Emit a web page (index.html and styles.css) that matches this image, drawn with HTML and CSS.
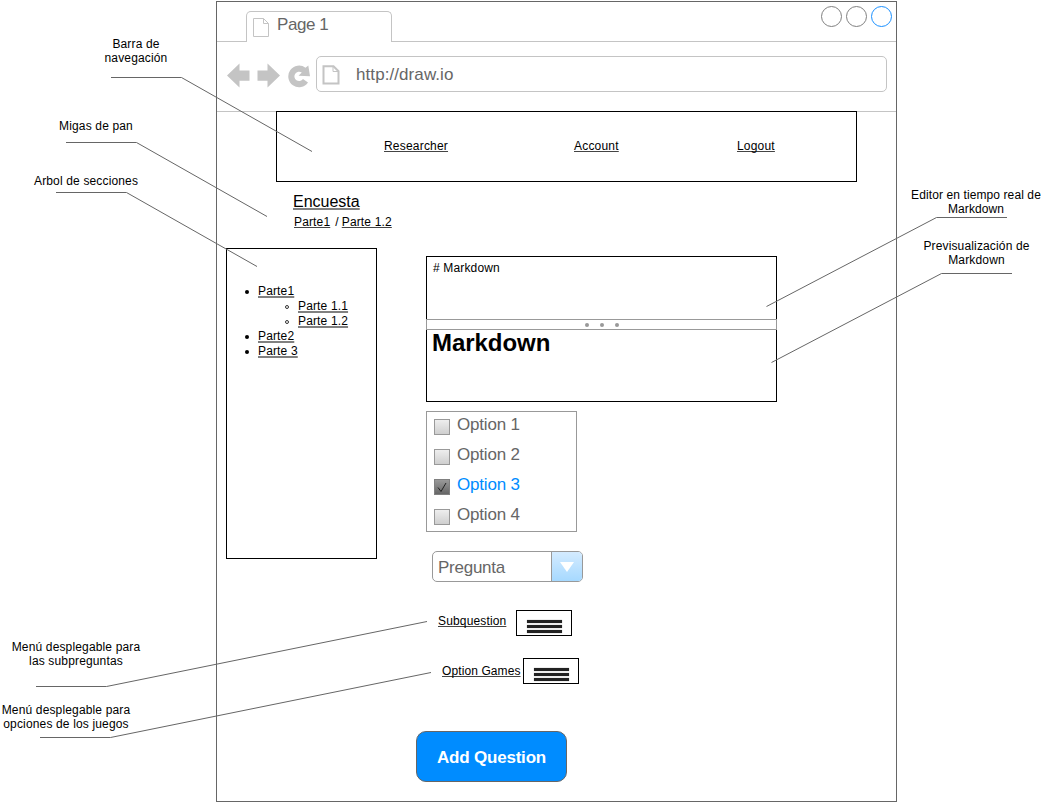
FILE: index.html
```html
<!DOCTYPE html>
<html lang="es">
<head>
<meta charset="utf-8">
<title>Encuesta</title>
<link rel="stylesheet" href="styles.css">
</head>
<body>
<div class="board">
  <main class="window">
    <header class="tabs">
      <div class="tab">
        <svg class="tab-icon" width="17" height="20" viewBox="0 0 17 20"><path d="M.5.5h10l5 5v13h-15zM10.500.5v5h5" fill="none" stroke="#c4c4c4"/></svg>
        <span>Page 1</span>
      </div>
      <div class="controls"><i></i><i></i><i class="active"></i></div>
    </header>
    <div class="toolbar">
      <svg class="nav-icons" width="84" height="26" viewBox="0 0 84 26" fill="#c4c4c4">
        <path d="M0 12.500 12.500.5v7h10v10.300h-10v6.700z"/>
        <path d="M53 12.500 40.500.5v7h-10v10.300h10v6.700z"/>
        <path d="M81.300 2.500 83 13.200 71.500 12.700 74.800 9.500A4.700 4.700 0 1 0 76 16L81 19.500A10.800 10.800 0 1 1 78.500 4.700z"/>
      </svg>
      <div class="address">
        <svg width="18" height="20" viewBox="0 0 18 20"><path d="M1.500 1.200h10l5 5v12.300h-15z" fill="none" stroke="#c4c4c4" stroke-width="2"/><path d="M11 1.500v5h5" fill="none" stroke="#c4c4c4"/></svg>
        <span>http://draw.io</span>
      </div>
    </div>
    <nav class="navbar"><a>Researcher</a><a>Account</a><a>Logout</a></nav>
    <section class="heading">
      <h1><a>Encuesta</a></h1>
      <p><a>Parte1</a><span class="slash">/</span><a>Parte 1.2</a></p>
    </section>
    <div class="content">
      <aside class="tree">
        <ul>
          <li><a>Parte1</a>
            <ul><li><a>Parte 1.1</a></li><li><a>Parte 1.2</a></li></ul>
          </li>
          <li><a>Parte2</a></li>
          <li><a>Parte 3</a></li>
        </ul>
      </aside>
      <div class="form">
        <div class="editor">
          <div class="source"># Markdown</div>
          <div class="splitter"><i></i><i></i><i></i></div>
          <div class="preview"><span>Markdown</span></div>
        </div>
        <div class="options">
          <div class="option"><i class="box"></i><span>Option 1</span></div>
          <div class="option"><i class="box"></i><span>Option 2</span></div>
          <div class="option checked"><i class="box"><svg width="14" height="14" viewBox="0 0 14 14"><path d="M3 7.500 6 11.500 11 3" fill="none" stroke="#222"/></svg></i><span>Option 3</span></div>
          <div class="option"><i class="box"></i><span>Option 4</span></div>
        </div>
        <div class="select"><span>Pregunta</span><div class="arrow"><svg width="14" height="10" viewBox="0 0 14 10"><path d="M0 0h14L7 10z" fill="#fff"/></svg></div></div>
        <div class="menu-row sub"><a>Subquestion</a><div class="menu"><i></i><i></i><i></i></div></div>
        <div class="menu-row games"><a>Option Games</a><div class="menu"><i></i><i></i><i></i></div></div>
        <div class="add"><span>Add Question</span></div>
      </div>
    </div>
  </main>

  <svg class="leaders" width="1042" height="806" viewBox="0 0 1042 806" fill="none" stroke="#666">
    <path d="M111 77.500H181.500L312 151.500"/>
    <path d="M66 142.500H136.500L267 216.500"/>
    <path d="M56 192.500H126.500L257 266.500"/>
    <path d="M36 686.500H106.500L427 621.500"/>
    <path d="M40 737.500H110.500L431 672.500"/>
    <path d="M1007 217.500H936.500L766.500 306.500"/>
    <path d="M1012 273.500H941.500L771.500 362.500"/>
  </svg>
  <div class="note n-nav">Barra de<br>navegación</div>
  <div class="note n-crumbs">Migas de pan</div>
  <div class="note n-tree">Arbol de secciones</div>
  <div class="note n-sub">Menú desplegable para<br>las subpreguntas</div>
  <div class="note n-games">Menú desplegable para<br>opciones de los juegos</div>
  <div class="note n-editor">Editor en tiempo real de<br>Markdown</div>
  <div class="note n-preview">Previsualización de<br>Markdown</div>
</div>
</body>
</html>
```
FILE: styles.css
```css
*, *::before { box-sizing: border-box; }
body { margin: 0; background: #fff; color: #000; font: 12px/14px "Liberation Sans", Arial, sans-serif; letter-spacing: .15px; }
ul, h1, p { margin: 0; padding: 0; font-weight: normal; }
i { display: block; }
svg { display: block; flex: none; }
span, a { white-space: nowrap; }
a { text-decoration: underline #444 1px; text-underline-offset: 1px; text-decoration-skip-ink: none; }

.board { position: relative; width: 1042px; height: 806px; padding: 1px 0 0 216px; overflow: hidden; }
.window { width: 681px; height: 801px; border: 1px solid #666; }

.tabs { display: flex; justify-content: space-between; height: 40px; padding-left: 29px; border-bottom: 1px solid #c4c4c4; }
.tab { display: flex; width: 146px; height: 31px; margin-top: 9px; padding-left: 6px; background: #fff; border: 1px solid #c4c4c4; border-bottom: 0; border-radius: 5px 5px 0 0; color: #666; font-size: 17px; line-height: 20px; letter-spacing: -.45px; }
.tab-icon { margin: 6px 7px 0 0; }
.tab span { margin-top: 3px; }
.controls { display: flex; gap: 4px; padding: 4px 4px 0 0; }
.controls i { width: 21px; height: 21px; border: 1px solid #808080; border-radius: 50%; }
.controls .active { border-color: #1a90ff; }

.toolbar { display: flex; height: 70px; padding: 14px 9px 0 10px; border-bottom: 1px solid #c4c4c4; }
.nav-icons { margin: 7px 5px 0 0; }
.address { display: flex; width: 571px; height: 36px; padding: 8px 0 0 5px; border: 1px solid #c4c4c4; border-radius: 5px; color: #666; font-size: 17px; line-height: 20px; letter-spacing: .08px; }
.address span { margin: 0 0 0 16px; }

.navbar { display: grid; grid-template-columns: 190px 163px 120px; align-items: start; justify-items: start; width: 581px; height: 71px; margin: -1px 0 0 59px; padding: 27px 0 0 107px; border: 1px solid #000; background: #fff; letter-spacing: .2px; }

.heading { height: 66px; padding: 10px 0 0 76px; }
.heading h1 { font-size: 16px; line-height: 20px; letter-spacing: 0; }
.heading h1 a { text-decoration: underline #808080 2px; }
.heading p { margin: 3px 0 0 1px; }
.slash { margin: 0 3px 0 5px; }

.content { display: flex; align-items: flex-start; gap: 39px; padding-left: 9px; }
.tree { width: 151px; height: 311px; padding: 35px 0 0 31px; border: 1px solid #000; line-height: 15px; }
.tree ul ul { padding-left: 40px; }
.tree ul { list-style: none; }
.tree li::before { content: ""; float: left; width: 4px; height: 4px; margin: 6px 0 0 -13px; border-radius: 50%; background: #000; }
.tree li li::before { background: #fff; border: 1px solid #333; }
.tree a { text-decoration: underline #808080 2px; }

.form { display: flex; flex-direction: column; padding: 8px 0 0 10px; }
.editor { width: 351px; height: 146px; border: 1px solid #000; }
.source { height: 62px; padding: 4px 0 0 6px; }
.splitter { display: flex; justify-content: center; align-items: center; gap: 11px; height: 11px; margin: 0 -1px; border: 1px solid #999; background: #fff; }
.splitter i { width: 4px; height: 4px; border-radius: 50%; background: #999; }
.preview { padding-left: 5px; font-size: 24px; line-height: 26px; font-weight: bold; letter-spacing: -.05px; }
.options { width: 151px; height: 121px; margin-top: 9px; padding-left: 7px; border: 1px solid #999; color: #666; font-size: 17px; line-height: 20px; letter-spacing: -.2px; }
.option { display: flex; height: 30px; padding-top: 3px; }
.box { width: 16px; height: 16px; margin: 4px 7px 0 0; border: 1px solid #999; background: linear-gradient(#eee, #cfcfcf); }
.checked { color: #008cff; }
.checked .box { background: linear-gradient(#999, #666); border-color: #808080; }
.select { display: flex; justify-content: space-between; width: 151px; height: 31px; margin: 19px 0 0 6px; padding-left: 5px; border: 1px solid #999; border-radius: 5px; overflow: hidden; color: #666; font-size: 17px; line-height: 32px; letter-spacing: -.25px; }
.arrow { width: 31px; padding: 10px 0 0 8px; border-left: 1px solid #999; background: linear-gradient(#d4ebff, #a6d9ff); }
.menu-row { display: flex; align-items: flex-start; }
.sub { margin: 28px 0 0 12px; }
.sub a { width: 78px; padding-top: 4px; }
.games { margin: 22px 0 0 16px; }
.games a { width: 81px; padding-top: 6px; letter-spacing: .1px; }
.menu { display: grid; align-content: start; gap: 2px; width: 56px; height: 26px; padding: 9px 0 0 10px; border: 1px solid #000; }
.menu i { width: 35px; height: 3px; background: #222; box-shadow: 0 0 1px #555; }
.add { width: 151px; height: 51px; margin: 47px 0 0 -10px; border: 1px solid #666; border-radius: 10px; background: #008cff; color: #fff; text-align: center; font-size: 17px; line-height: 51px; font-weight: bold; letter-spacing: -.2px; }

.leaders { position: absolute; left: 0; top: 0; }
.note { position: absolute; text-align: center; white-space: nowrap; }
.n-nav { left: 104px; top: 37px; width: 64px; }
.n-crumbs { left: 59px; top: 119px; width: 74px; }
.n-tree { left: 34px; top: 174px; width: 104px; }
.n-sub { left: 11px; top: 640px; width: 130px; }
.n-games { left: 1px; top: 703px; width: 130px; }
.n-editor { left: 911px; top: 188px; width: 130px; letter-spacing: .1px; }
.n-preview { left: 923px; top: 239px; width: 107px; }
```
